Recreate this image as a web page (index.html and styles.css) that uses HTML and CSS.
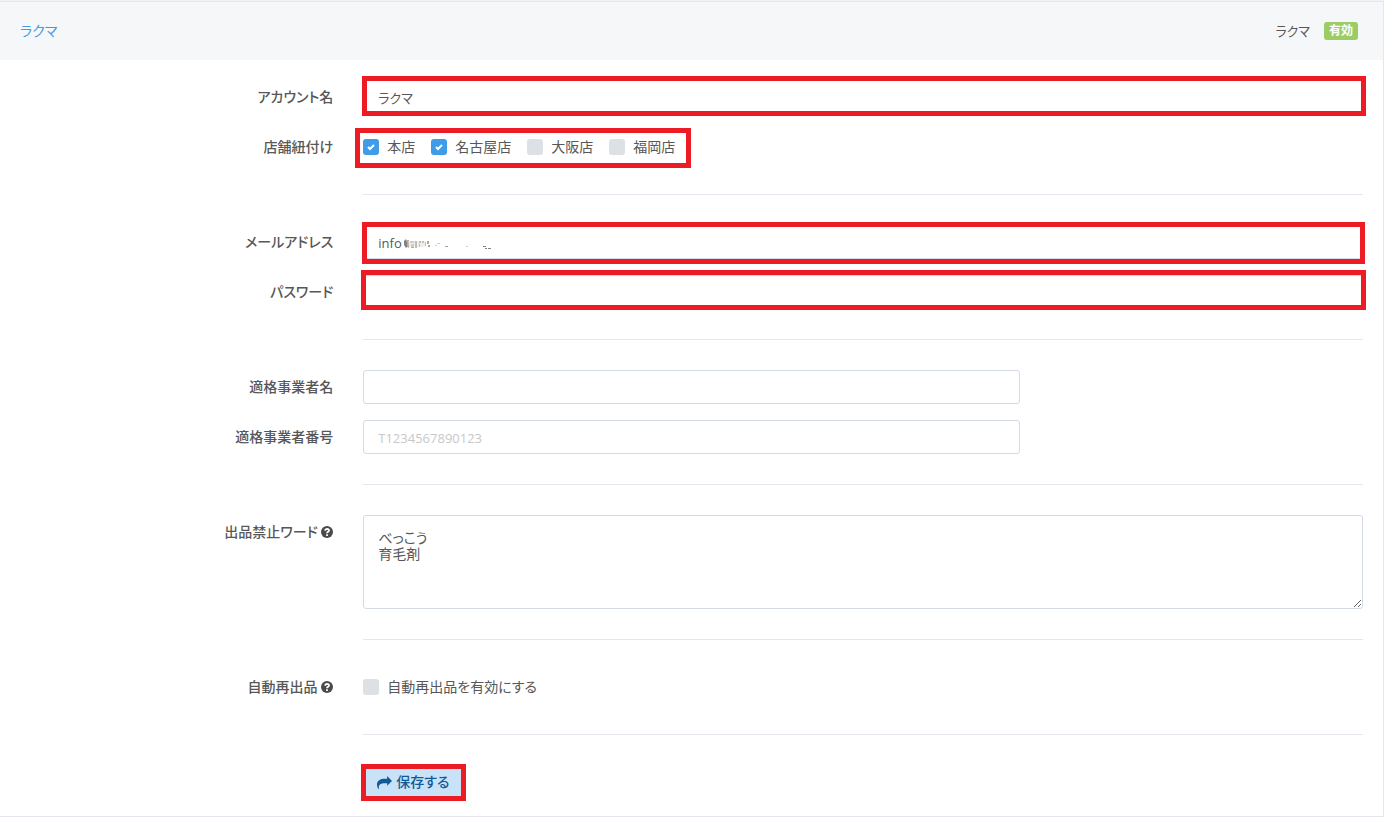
FILE: index.html
```html
<!doctype html>
<html lang="ja">
<head>
    <meta charset="utf-8">
    <title>ラクマ</title>
    <link rel="stylesheet" href="styles.css">
</head>
<body>
<div class="block">
    <div class="block-header">
        <h3 class="block-title"><a href="#">ラクマ</a></h3>
        <div class="block-options">
            <span>ラクマ</span>
            <span class="badge">有効</span>
        </div>
    </div>
    <form class="block-content" onsubmit="return false;">
        <div class="row">
            <label class="row-label" for="account">アカウント名</label>
            <div class="mark mark-account">
                <input class="text" type="text" id="account" value="ラクマ">
            </div>
        </div>
        <div class="row">
            <span class="row-label" id="shops">店舗紐付け</span>
            <div class="mark mark-shops" role="group" aria-labelledby="shops">
                <label class="check"><input type="checkbox" checked>本店</label>
                <label class="check"><input type="checkbox" checked>名古屋店</label>
                <label class="check"><input type="checkbox">大阪店</label>
                <label class="check"><input type="checkbox">福岡店</label>
            </div>
        </div>
        <hr>
        <div class="row">
            <label class="row-label" for="mail">メールアドレス</label>
            <div class="mark mark-mail">
                <input class="text latin" type="text" id="mail" value="info">
                <!-- erased part of the address -->
                <svg class="smudge" width="96" height="16" viewBox="0 0 96 16" aria-hidden="true">
                    <path d="M1 4l2-2 1 3v5l-1 1-2-3z" fill="#85817d"/>
                    <path d="M4 3h2v8l-2-1zM7 4h4v2H7zM8 7h3v4H8z" fill="#b3aaa2"/>
                    <path d="M5 4h17v6H6z" fill="#e6e2dd" opacity=".6"/>
                    <path d="M12 4h2v7h-2zM16 4h2v2h-2zM16 7h1v3h-1zM19 4h2v2h-2zM22 5h1v4h-1z" fill="#c3bdb5"/>
                    <path d="M24 4h2v3h-2zM25 8h2v2h-2z" fill="#a9a5a0"/>
                    <path d="M32 8h2v1h-2zM34 6h3v1h-3zM63 9h2v1h-2z" fill="#cfd3cf"/>
                    <path d="M42 9h3v1h-3z" fill="#a5a29c"/>
                    <path d="M80 9h3v1h-3zM82 11h2v1h-2zM85 11h3v1h-3z" fill="#84817c"/>
                </svg>
            </div>
        </div>
        <div class="row">
            <label class="row-label" for="password">パスワード</label>
            <div class="mark mark-password">
                <input class="text" type="password" id="password">
            </div>
        </div>
        <hr>
        <div class="row">
            <label class="row-label" for="company">適格事業者名</label>
            <div>
                <input class="text short" type="text" id="company">
            </div>
        </div>
        <div class="row">
            <label class="row-label" for="number">適格事業者番号</label>
            <div>
                <input class="text short latin" type="text" id="number" placeholder="T1234567890123">
            </div>
        </div>
        <hr>
        <div class="row">
            <label class="row-label" for="words">出品禁止ワード
                <svg class="help" viewBox="0 0 12 12"><circle cx="6" cy="6" r="6"/><path d="M4 4.600C4.200 2.600 8 2.400 8 4.500 8 5.800 6 5.800 6 7.300M6 8.200v1.800"/></svg>
            </label>
            <div>
                <textarea class="text" id="words">べっこう
育毛剤</textarea>
            </div>
        </div>
        <hr>
        <div class="row">
            <span class="row-label">自動再出品
                <svg class="help" viewBox="0 0 12 12"><circle cx="6" cy="6" r="6"/><path d="M4 4.600C4.200 2.600 8 2.400 8 4.500 8 5.800 6 5.800 6 7.300M6 8.200v1.800"/></svg>
            </span>
            <div class="checks">
                <label class="check"><input type="checkbox">自動再出品を有効にする</label>
            </div>
        </div>
        <hr>
        <div class="row">
            <div class="mark mark-save">
                <button class="save" type="submit">
                    <svg width="15" height="13" viewBox="0 0 14 12"><path d="M14 4.500L9.500 0v2.500H7.500C3 2.500 0 4.300 0 8c0 1.500.600 3 1.300 4 .300.300.600.100.500-.200C1.200 8.200 3 6.700 7.500 6.700h2V9z" fill="currentColor"/></svg>
                    保存する
                </button>
            </div>
        </div>
    </form>
</div>
</body>
</html>
```
FILE: styles.css
```css
* {
    box-sizing: border-box;
}

body {
    margin: 0;
    padding-top: 1px;
    background: #f0f2f5;
    color: #575757;
    font-family: "Open Sans", "Noto Sans CJK JP", sans-serif;
    font-size: 14px;
    line-height: 20px;
    font-feature-settings: "palt";
}

.block {
    background: #fff;
    border: 1px solid #e4e7ed;
    border-left: none;
}

.block-header {
    display: flex;
    align-items: center;
    justify-content: space-between;
    height: 58px;
    padding: 0 25px 0 20px;
    background: #f6f7f9;
}

.block-title {
    margin: 0;
    font-size: 14px;
    font-weight: 400;
}

.block-title a {
    color: #3f9ce8;
    text-decoration: none;
}

.block-options {
    display: flex;
    align-items: center;
    gap: 14px;
}

.block-options span:first-child {
    font-size: 13px;
}

.badge {
    padding: 0 5px;
    border-radius: 3px;
    background: #9ccc65;
    color: #fff;
    font-size: 12px;
    font-weight: 700;
    line-height: 18px;
}

.block-content {
    padding: 20px 20px 17px 0;
}

.row {
    display: grid;
    grid-template-columns: 1fr 3fr;
    column-gap: 30px;
}

.row + .row {
    margin-top: 16px;
}

.row-label {
    padding: 7px 0;
    font-weight: 500;
    text-align: right;
}

hr {
    height: 1px;
    margin: 30px 0 30px calc(25% + 22px);
    border: none;
    background: #e4e7ed;
}

/* fields */
.text {
    display: block;
    width: 100%;
    height: 34px;
    padding: 6px 14px;
    border: 1px solid #d4dae3;
    border-radius: 3px;
    background: #fff;
    color: #575757;
    font: inherit;
    font-feature-settings: inherit;
    outline: none;
}

#account {
    font-size: 13px;
}

.latin {
    padding-top: 7px;
    padding-bottom: 5px;
    font-size: 13px;
}

.short {
    width: 657px;
    max-width: 100%;
}

.text::placeholder {
    color: #c8c8c8;
}

textarea.text {
    height: 94px;
    padding: 14px;
    line-height: 16px;
    resize: vertical;
}

.checks,
.mark-shops {
    display: flex;
    align-items: center;
    gap: 16px;
    height: 34px;
    justify-self: start;
}

.check {
    display: flex;
    align-items: center;
    gap: 8px;
}

.check input {
    appearance: none;
    width: 16px;
    height: 16px;
    margin: 0;
    border-radius: 3px;
    background: #dde1e5;
}

.check input:checked {
    background: #3f9ce8 url("data:image/svg+xml,%3Csvg xmlns='http://www.w3.org/2000/svg' viewBox='0 0 16 16'%3E%3Cpath d='M5 8l2 2 4-4' fill='none' stroke='%23fff' stroke-width='2'/%3E%3C/svg%3E");
}

.help {
    width: 12px;
    height: 12px;
    vertical-align: -1px;
    fill: #4a4a4a;
}

.help path {
    fill: none;
    stroke: #fff;
    stroke-width: 1.8;
}

/* red frames drawn over the fields */
.mark {
    position: relative;
}

.mark::after {
    content: "";
    position: absolute;
    inset: -4px -3px -2px -1px;
    border: 5px solid #ed1c24;
    pointer-events: none;
}

.mark-shops::after {
    inset: -2px -16px -4px -8px;
}

.mark-mail::after {
    inset: -3px -2px -5px -1px;
}

.mark-password::after {
    inset: -5px -3px -1px -2px;
}

.mark-save {
    grid-column: 2;
    justify-self: start;
}

.mark-save::after {
    inset: -1px -3px -2px -2px;
}

.smudge {
    position: absolute;
    left: 40px;
    top: 12px;
}

.save {
    display: flex;
    align-items: center;
    gap: 4px;
    height: 34px;
    padding: 0 14px;
    border: none;
    border-radius: 3px;
    background: #c8e2f8;
    color: #125a96;
    font: inherit;
    font-weight: 500;
    font-feature-settings: inherit;
}
```
